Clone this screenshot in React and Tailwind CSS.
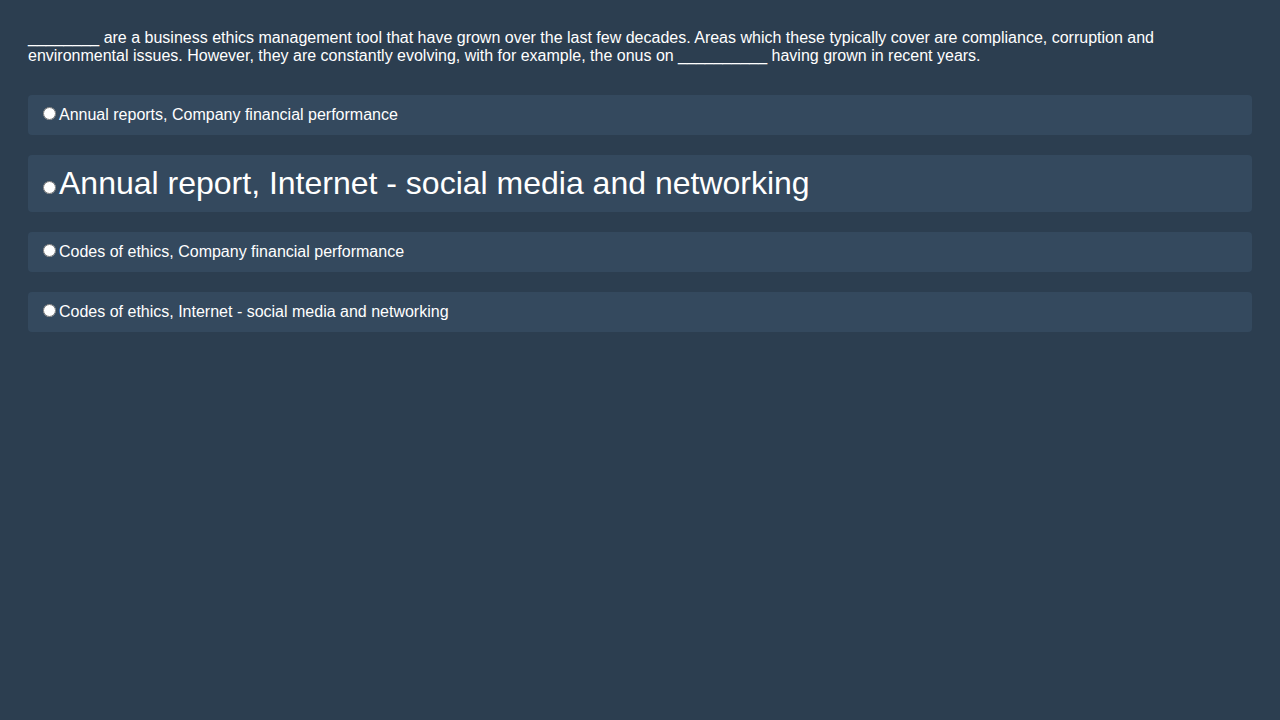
const options = [
  { text: "Annual reports, Company financial performance", big: false },
  { text: "Annual report, Internet - social media and networking", big: true },
  { text: "Codes of ethics, Company financial performance", big: false },
  { text: "Codes of ethics, Internet - social media and networking", big: false },
];

export default function App() {
  return (
    <div
      className="min-h-[720px] bg-[#2c3e50] p-[28px] text-white"
      style={{ fontFamily: '"Liberation Sans", Arial, sans-serif' }}
    >
      <p className="text-[16px] leading-[18px] pt-[1px] mb-[30px] pr-[70px]">
        ________ are a business ethics management tool that have grown over the last few decades. Areas which these
        typically cover are compliance, corruption and environmental issues. However, they are constantly evolving, with
        for example, the onus on __________ having grown in recent years.
      </p>

      <div className="flex flex-col gap-[20px]">
        {options.map((opt, i) => (
          <label
            key={i}
            className={
              "block bg-[#34495e] rounded-[4px] px-[15px] " +
              (opt.big ? "text-[32px] leading-[37px] py-[10px]" : "text-[16px] leading-[18px] py-[11px]")
            }
          >
            <input type="radio" name="answer" className="mr-[3px] w-[13px] h-[13px]" />
            {opt.text}
          </label>
        ))}
      </div>
    </div>
  );
}
